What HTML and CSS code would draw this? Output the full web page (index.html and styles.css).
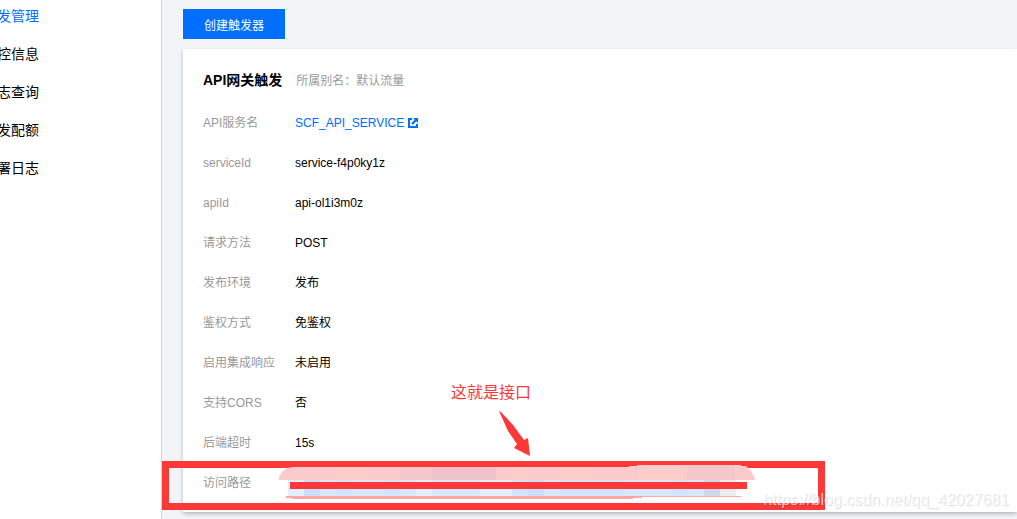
FILE: index.html
```html
<!DOCTYPE html>
<html lang="zh-CN">
<head>
    <meta charset="UTF-8">
    <meta name="viewport" content="width=device-width, initial-scale=1.0">
    <title>触发管理</title>
    <link rel="stylesheet" href="styles.css">
</head>
<body>
    <div class="page">
        <nav class="sidebar">
            <ul class="menu">
                <li><a href="#" class="active">发管理</a></li>
                <li><a href="#">控信息</a></li>
                <li><a href="#">志查询</a></li>
                <li><a href="#">发配额</a></li>
                <li><a href="#">署日志</a></li>
            </ul>
        </nav>

        <main class="content">
            <button type="button" class="btn-create">创建触发器</button>

            <section class="card">
                <header class="card-header">
                    <h3>API网关触发</h3>
                    <span class="alias">所属别名：默认流量</span>
                </header>
                <dl class="info">
                    <dt>API服务名</dt>
                    <dd>
                        <a href="#" class="service-link">SCF_API_SERVICE
                            <svg class="icon-link" viewBox="0 0 10 10" width="10" height="10">
                                <path d="M4 0H0v10h10V6H8v2H2V2h2z"/>
                                <path d="M5 0h5v5L8.300 3.300 4.800 6.800 3.200 5.200 6.700 1.700z"/>
                            </svg>
                        </a>
                    </dd>
                    <dt>serviceId</dt>
                    <dd>service-f4p0ky1z</dd>
                    <dt>apiId</dt>
                    <dd>api-ol1i3m0z</dd>
                    <dt>请求方法</dt>
                    <dd>POST</dd>
                    <dt>发布环境</dt>
                    <dd>发布</dd>
                    <dt>鉴权方式</dt>
                    <dd>免鉴权</dd>
                    <dt>启用集成响应</dt>
                    <dd>未启用</dd>
                    <dt>支持CORS</dt>
                    <dd>否</dd>
                    <dt>后端超时</dt>
                    <dd>15s</dd>
                    <dt>访问路径</dt>
                    <dd></dd>
                </dl>
            </section>
        </main>

        <!-- 标注 -->
        <div class="mark-frame"></div>
        <svg class="mark-mosaic" viewBox="0 0 476 36" width="476" height="36">
            <path fill="#fbcacd" d="M0 16V13L4 7 8 4 14 3H350V2H358V1H462V2H467L472 7 475 12 476 16z"/>
            <path fill="#ffcccc" d="M57 3h32v13H57zM233 3h16v13h-16zM281 3h32v13h-32zM360 1h48v15h-48z"/>
            <path fill="#f5c6cb" d="M121 3h32v13h-32zM408 1h48v15h-48z"/>
            <path fill="#f0c3ca" d="M153 3h64v13h-64z"/>
            <path fill="#dae8ff" d="M9 16h432v16H9z"/>
            <path fill="#cbdffd" d="M25 16h16v16H25zM249 16h16v16h-16z"/>
            <path fill="#d2e4ff" d="M57 16h16v16H57zM105 16h16v16h-16zM233 16h16v16h-16zM281 16h64v16h-64zM393 16h16v16h-16z"/>
            <path fill="#e3eeff" d="M9 16h16v16H9zM137 16h16v16h-16zM201 16h32v16h-32z"/>
            <path fill="#ced9e8" d="M425 16h16v16h-16z"/>
            <path fill="#ededed" d="M441 16h16v16h-16z"/>
            <path fill="#fd3838" d="M11 18h457v7H11z"/>
            <path fill="#ffa5a5" d="M7 32h455v1H363v1h-9v1H13v-1H7z"/>
        </svg>
        <span class="mark-text">这就是接口</span>
        <svg class="mark-arrow" viewBox="0 0 32 46" width="32" height="46">
            <path fill="#fd3838" d="M0 0L2 1 14 14 25 29 29 27 31 45 15 37 18 33 9 20z"/>
        </svg>
        <span class="watermark">https://blog.csdn.net/qq_42027681</span>
    </div>
</body>
</html>
```
FILE: styles.css
```css
body {
    margin: 0;
    background-color: #f2f4f8;
    font-family: "Liberation Sans", "Noto Sans CJK SC", sans-serif;
    font-size: 12px;
    color: #000;
}
.page {
    position: relative;
    display: flex;
    min-height: 100vh;
    overflow: hidden;
}
.sidebar {
    box-sizing: border-box;
    flex: 0 0 162px;
    background-color: #fff;
    border-right: 1px solid #cfd0da;
}
.menu {
    list-style: none;
    margin: -3px 0 0 -3px;
    padding: 0;
}
.menu a {
    display: block;
    font-size: 14px;
    line-height: 38px;
    color: #000;
    text-decoration: none;
}
.menu a.active {
    color: #006eff;
}
.content {
    flex: 1;
    padding: 9px 0 7px 21px;
}
.btn-create {
    display: block;
    height: 30px;
    padding: 0 21px;
    background-color: #006eff;
    color: #fff;
    font-family: inherit;
    font-size: 12px;
    border: none;
    cursor: pointer;
}
.card {
    margin-top: 10px;
    padding: 10px 20px 9px;
    background-color: #fff;
    box-shadow: 0 2px 4px rgba(54, 58, 80, 0.32);
}
.card-header {
    display: flex;
    align-items: center;
    gap: 14px;
    height: 40px;
    margin-bottom: 4px;
}
.card-header h3 {
    margin: 0;
    font-size: 14px;
}
.alias {
    color: #999;
}
.info {
    display: grid;
    grid-template-columns: 92px 1fr;
    grid-auto-rows: 40px;
    margin: 0;
    line-height: 40px;
}
.info dt {
    color: #999;
}
.info dd {
    margin: 0;
}
.service-link {
    display: flex;
    align-items: center;
    gap: 4px;
    color: #006eff;
    text-decoration: none;
}
.icon-link {
    fill: #006eff;
}
.mark-frame {
    position: absolute;
    box-sizing: border-box;
    left: 162px;
    top: 461px;
    width: 663px;
    height: 49px;
    border: 7px solid #fd3838;
}
.mark-mosaic {
    position: absolute;
    left: 279px;
    top: 464px;
}
.mark-text {
    position: absolute;
    left: 451px;
    top: 381px;
    font-size: 16px;
    line-height: 24px;
    color: #fd3838;
}
.mark-arrow {
    position: absolute;
    left: 499px;
    top: 411px;
}
.watermark {
    position: absolute;
    right: 8px;
    top: 490px;
    font-size: 16px;
    line-height: 20px;
    color: rgba(255, 255, 255, 0.7);
    text-shadow: 1px 1px 1px rgba(0, 0, 0, 0.14);
}
```
